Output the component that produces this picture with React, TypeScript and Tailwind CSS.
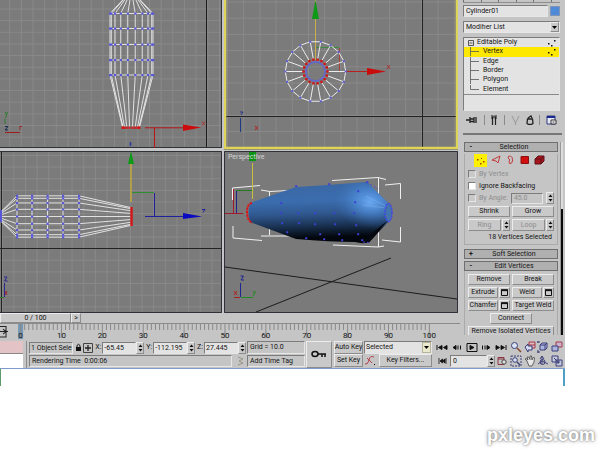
import type { ReactNode } from 'react';
import clsx from 'clsx';

const raised = 'border border-t-[#ececec] border-l-[#ececec] border-r-[#8c8c8c] border-b-[#8c8c8c] bg-[#c9c9c9]';
const sunken = 'border border-t-[#7c7c7c] border-l-[#7c7c7c] border-r-[#e6e6e6] border-b-[#e6e6e6]';

const range = (n: number) => Array.from({ length: n }, (_, i) => i);
const ringCos = [1, 0.94, 0.766, 0.5, 0.174, -0.174, -0.5, -0.766, -0.94, -1];
const ringSin = [0.985, 0.866, 0.643, 0.342, 0, -0.342, -0.643, -0.866, -0.985];

function Btn({ children, className, disabled, label }: { children?: ReactNode; className?: string; disabled?: boolean; label?: string }) {
  return (
    <button
      type="button"
      disabled={disabled}
      aria-label={label}
      className={clsx(raised, 'flex items-center justify-center whitespace-nowrap', disabled && 'text-[#8d8d8d]', className)}
    >
      {children}
    </button>
  );
}

function Spinner({ label }: { label: string }) {
  return (
    <button type="button" aria-label={label} className={clsx(raised, 'w-[8px] h-[12px] shrink-0 flex items-center justify-center')}>
      <svg width="5" height="8" viewBox="0 0 5 8"><path d="M0.500 3L2.500 0.500L4.500 3ZM0.500 5L2.500 7.500L4.500 5Z" fill="#111" /></svg>
    </button>
  );
}

function Gridlines({ x, y, step, w, h }: { x: number; y: number; step: number; w: number; h: number }) {
  return (
    <g stroke="#898989" strokeWidth="1">
      {range(Math.ceil((w - x) / step)).map((i) => (
        <line key={`v${i}`} x1={x + i * step} x2={x + i * step} y1="0" y2={h} />
      ))}
      {range(Math.ceil((h - y) / step)).map((i) => (
        <line key={`h${i}`} y1={y + i * step} y2={y + i * step} x1="0" x2={w} />
      ))}
    </g>
  );
}

function TopView() {
  const rings = [13.5, 28.5, 44.5, 60, 75];
  return (
    <svg viewBox="0 0 222 148" preserveAspectRatio="xMinYMin slice" className="block w-full h-[148px] bg-[#7b7b7b]" role="img" aria-label="Top viewport">
      <Gridlines x={9.7} y={9} step={11.65} w={222} h={148} />
      <path d="M206.500 0V148" stroke="#1c1c1c" />
      <path d="M0 147.500H221.500V0" stroke="#2e3138" fill="none" />
      <g stroke="#ececec" strokeWidth="0.9">
        {ringCos.map((c) => (
          <g key={c}>
            <line x1={131.5 + c * 6} y1="-3" x2={131.5 + c * 21.5} y2="13.5" />
            <line x1={131.5 + c * 21.5} y1="13.5" x2={131.5 + c * 21.5} y2="75" />
            <line x1={131.5 + c * 21.5} y1="75" x2={131 + c * 8.5} y2="127" />
          </g>
        ))}
        {rings.map((y) => <line key={y} x1="110" x2="153" y1={y} y2={y} />)}
      </g>
      {rings.map((y) => ringCos.map((c) => (
        <rect key={`${y}${c}`} x={130.5 + c * 21.5} y={y - 1} width="2.2" height="2.2" fill="#5757d8" />
      )))}
      {ringCos.map((c) => <rect key={c} x={130 + c * 8.5} y="126.5" width="2" height="2.4" fill="#d01818" />)}
      <path d="M145 127.800H184M154.500 128V148" stroke="#b81414" />
      <path d="M183 124.500L201 127.500L183 131Z" fill="#cc0c0c" />
      <path d="M202 121.500l3 4m0-4l-3 4" stroke="#b02424" strokeWidth="0.8" />
      <path d="M130.500 142v4" stroke="#2b3aa5" strokeWidth="1.500" />
      <path d="M5 132.500H20" stroke="#a01c1c" />
      <path d="M19.500 126.500h2.500M20 126v4" stroke="#a01c1c" strokeWidth="0.8" />
      <path d="M5 124V119M5 112l1.500 3l1-3M6.500 115l-1 3" stroke="#2f7a2f" fill="none" />
      <path d="M5 126.500h3l-3 3.500h3" stroke="#142d50" fill="none" />
    </svg>
  );
}

function FrontView() {
  const at = (deg: number, r: number) => [315.5 + r * Math.cos((deg * Math.PI) / 180), 71.5 + r * Math.sin((deg * Math.PI) / 180)];
  const outer = range(18).map((i) => at(i * 20, 30.2));
  const inner = range(18).map((i) => at(i * 20, 12));
  const core = range(18).map((i) => at(i * 20, 9.6));
  return (
    <svg viewBox="224 0 234 150" preserveAspectRatio="xMinYMin slice" className="block w-full h-[150px] bg-[#7b7b7b]" role="img" aria-label="Front viewport">
      <g transform="translate(224 0)"><Gridlines x={3.5} y={2} step={16.2} w={234} h={150} /></g>
      <path d="M422.500 0V150M224 116.500H458" stroke="#222" />
      <path d="M315.500 0V60" stroke="#c9b04c" />
      <path d="M312 19L315.500 0L319 19Z" fill="#0d9a16" />
      <path d="M316 47.500H339" stroke="#3f8a3f" />
      <path d="M339.500 48V71" stroke="#a84040" />
      <path d="M328 71.500H368" stroke="#b82020" />
      <path d="M367 68L386 71.500L367 75Z" fill="#c80c0c" />
      <path d="M387 65l3 4m0-4l-3 4" stroke="#b02424" strokeWidth="0.8" />
      <g stroke="#ececec" fill="none">
        <polygon points={outer.map((p) => p.join(',')).join(' ')} />
        {outer.map((p, i) => <line key={i} x1={p[0]} y1={p[1]} x2={inner[i][0]} y2={inner[i][1]} />)}
      </g>
      <polygon points={core.map((p) => p.join(',')).join(' ')} stroke="#6468c8" strokeWidth="1.800" fill="none" />
      {outer.map((p, i) => <rect key={i} x={p[0] - 1} y={p[1] - 1} width="2" height="2" fill="#5a5ad8" />)}
      {inner.map((p, i) => <rect key={i} x={p[0] - 1.2} y={p[1] - 1.2} width="2.4" height="2.4" fill="#cf1515" />)}
      <path d="M240.500 118V132" stroke="#1d3a82" />
      <path d="M240 112h3l-2 3" stroke="#27348c" fill="none" />
      <path d="M255 126l3 4m0-4l-3 4" stroke="#b02424" />
      <path d="M225 0V148H457V0" stroke="#ded558" strokeWidth="2.500" fill="none" />
    </svg>
  );
}

function LeftView() {
  const rings = [17, 32, 47.5, 63, 79];
  return (
    <svg viewBox="0 151 222 162" preserveAspectRatio="xMinYMin slice" className="block w-full h-[162px] bg-[#7b7b7b]" role="img" aria-label="Left viewport">
      <g transform="translate(0 151)"><Gridlines x={2.2} y={4.4} step={11.65} w={222} h={162} /></g>
      <path d="M0 248.500H222M1.500 151V313" stroke="#222" />
      <path d="M0 151.500H221.500V312.500H0" stroke="#2e3138" fill="none" />
      <g stroke="#ececec" strokeWidth="0.9">
        {ringSin.map((s) => (
          <g key={s}>
            <line x1="1" y1={216.5 + s * 5} x2="17" y2={216.5 + s * 21} />
            <line x1="17" y1={216.5 + s * 21} x2="79" y2={216.5 + s * 21} />
            <line x1="79" y1={216.5 + s * 21} x2="131" y2={216.5 + s * 9} />
          </g>
        ))}
        {rings.map((x) => <line key={x} y1="196" y2="237" x1={x} x2={x} />)}
      </g>
      {rings.map((x) => ringSin.map((s) => (
        <rect key={`${x}${s}`} x={x - 1} y={215.5 + s * 21} width="2.2" height="2.2" fill="#5757d8" />
      )))}
      <path d="M1 210V222" stroke="#5757d8" strokeWidth="2" />
      <path d="M131.500 207V226" stroke="#d01818" strokeWidth="2.500" />
      <path d="M131 163V202" stroke="#c0a83c" strokeWidth="1.500" />
      <path d="M128 164L131 151L134 164Z" fill="#0d9a16" />
      <path d="M132 192.500H154" stroke="#2f8f2f" />
      <path d="M154.500 193V216M145 216.500H184" stroke="#20209c" />
      <path d="M183 213L202 216.500L183 219Z" fill="#0a0ac0" />
      <path d="M202 209.500h3l-2 3" stroke="#20209c" fill="none" />
      <path d="M4.500 283V297M4 277h3l-2.500 4h3" stroke="#2a2a90" fill="none" />
      <path d="M0 297.500H4" stroke="#2f7a2f" />
      <path d="M5 291l2 4m0-4l-2 4" stroke="#9c2020" strokeWidth="0.8" />
    </svg>
  );
}

function PerspectiveView() {
  const hull = 'M250 203L296 187Q330 185 367 182L388 203V222L369 242.500Q362 244 355 242Q330 242 296 239L250 222Q247 213 250 203Z';
  const dots = [
    [281, 203], [281, 213], [287, 232], [298, 213], [299, 223], [306, 238], [315, 213], [315, 224], [320, 234],
    [324, 239], [334, 213], [335, 224], [339, 234], [342, 240], [355, 202], [354, 213], [356, 225], [358, 234],
    [358, 191], [296, 186], [329, 184], [367, 182], [362, 240], [282, 223],
  ];
  return (
    <svg viewBox="224 151 234 162" preserveAspectRatio="xMinYMin slice" className="block w-full h-[162px] bg-[#7a7a7a]" role="img" aria-label="Perspective viewport">
      <defs>
        <linearGradient id="body" gradientUnits="userSpaceOnUse" x1="310" y1="183" x2="312" y2="242">
          <stop offset="0" stopColor="#3a67a3" />
          <stop offset="0.3" stopColor="#3b6dae" />
          <stop offset="0.52" stopColor="#30588f" />
          <stop offset="0.72" stopColor="#1a3354" />
          <stop offset="0.93" stopColor="#03060c" />
        </linearGradient>
        <radialGradient id="shine" cx="0" cy="0" r="1" gradientUnits="userSpaceOnUse" gradientTransform="translate(370 202) rotate(12) scale(38 27)">
          <stop offset="0" stopColor="#6dadf6" stopOpacity="0.95" />
          <stop offset="0.45" stopColor="#4f8edc" stopOpacity="0.6" />
          <stop offset="1" stopColor="#3a6cae" stopOpacity="0" />
        </radialGradient>
      </defs>
      <path d="M225 267L457 299M256 312L391 258" stroke="#1c1c1c" />
      <g stroke="#f0f0f0" fill="none">
        <path d="M232.500 200V188L260 185.500M233 226V238L262 240.500M261 190L270 191.500L288 190.500M269.500 191V235M261 236H290" />
        <path d="M332 180.500L378 177.500L386 179.500M378.500 178V247M385 185L400.500 183.500V199M400.500 227V242L382 240M333 245L378 247L384 246" />
      </g>
      <path d="M252.500 163V199" stroke="#c9c040" />
      <path d="M249 152H256V161H249Z" fill="#0b9312" />
      <path d="M236 190.500H252" stroke="#237a23" />
      <path d="M225 213.500H243M233.500 189V213" stroke="#a31a2c" />
      <path d="M236.500 191V213" stroke="#22228a" />
      <path d={hull} fill="url(#body)" />
      <path d={hull} fill="url(#shine)" />
      <path d="M363 205L386 208M366 196L386 206" stroke="#8cc0f8" strokeOpacity="0.35" />
      <path d="M360 243L387 221L369 242.500Z" fill="#05080e" />
      <ellipse cx="388.500" cy="212.500" rx="3.500" ry="9" fill="#4274ae" stroke="#4646e0" strokeWidth="1.500" strokeDasharray="2 1" />
      <path d="M252 203Q247 204 247 212Q247 220 252 223" stroke="#e01414" strokeWidth="2" strokeDasharray="2.500 0.800" fill="none" />
      {dots.map(([x, y]) => <rect key={`${x}-${y}`} x={x - 0.8} y={y - 0.8} width="2" height="2" fill="#3d3fd6" />)}
      <path d="M367 182L378 189M363 242L371 243" stroke="#4646d8" strokeDasharray="2 2" />
      <path d="M240.500 283V297" stroke="#1c2690" />
      <path d="M234 297.500H240" stroke="#a82020" />
      <path d="M241 297.500H253" stroke="#218a21" />
      <path d="M240.500 276h3l-2.500 4h3" stroke="#1c2690" fill="none" />
      <path d="M234 291l3 4m0-4l-3 4" stroke="#b02020" />
      <path d="M253 291l1.500 2.500l1.500-2.500M254.500 293l-1 3" stroke="#218a21" fill="none" />
      <path d="M224.500 151.500H457.500V312.500H224.500Z" stroke="#2e3138" fill="none" />
      <text x="228" y="159" fontSize="7" fill="#d6d6d6">Perspective</text>
    </svg>
  );
}

function Timeline() {
  return (
    <div className="h-[17px] border-t border-[#8a8a8a] overflow-hidden">
      <svg viewBox="0 324 458 16" preserveAspectRatio="xMinYMin slice" className="block w-full h-[16px]" role="img" aria-label="Time ruler">
        <rect x="18" y="324" width="5" height="15" fill="#7397b4" />
        <path d="M0 326.500H6V337H0M0 331.500H8M3 329L6 331.500L3 334" stroke="#222" fill="none" />
        <g stroke="#8a8a8a">
          {range(101).map((i) => <line key={i} x1={20.5 + i * 4.07} x2={20.5 + i * 4.07} y1="324" y2={i % 10 ? 330 : 338} />)}
        </g>
        {range(11).map((i) => (
          <text key={i} x={20.5 + i * 40.7} y="338" fontSize="8" textAnchor="middle" fill="#111">{i * 10}</text>
        ))}
      </svg>
    </div>
  );
}

function ModifierStack() {
  return (
    <div className={clsx(sunken, 'mt-[4px] h-[74px] bg-[#e3e3e3]')}>
      <ul className="flex h-[57px] flex-col border-b border-[#8a8a8a]">
        {['Editable Poly', 'Vertex', 'Edge', 'Border', 'Polygon', 'Element'].map((name, i) => (
          <li key={name} className={clsx('flex min-h-0 flex-1', name === 'Vertex' && 'bg-[#ffe800]')}>
            <button type="button" className="flex flex-1 items-center gap-[2px] pl-[3px] pr-[2px] text-left">
              {i === 0 ? (
                <svg width="8" height="9" viewBox="0 0 8 9" fill="none" stroke="#333"><path d="M1.500 2.500h5v5h-5zM2.500 5h3" strokeWidth="0.8" /></svg>
              ) : (
                <svg width="14" height="9" viewBox="0 0 14 9" fill="none" stroke="#555"><path d={i === 5 ? 'M3.500 0V4.500H12' : 'M3.500 0V9M3.500 4.500H12'} strokeWidth="0.8" /></svg>
              )}
              <span className="flex-1">{name}</span>
              {i < 2 && <svg width="10" height="8" viewBox="0 0 10 8" fill="#111"><path d="M1 4h1.500v1.500H1zM4 6h1.500v1.500H4zM7 1h1.500v1.500H7z" /></svg>}
            </button>
          </li>
        ))}
      </ul>
    </div>
  );
}

function StackTools() {
  return (
    <div className="mt-[2px] flex h-[14px] items-center justify-between px-[3px] text-[#222]">
      <button type="button" aria-label="Pin stack">
        <svg width="12" height="10" viewBox="0 0 12 10"><path d="M0 5H4M4 2V8M4 4H8M4 6.500H8M8 2V8M10 2V8" stroke="currentColor" strokeWidth="1.300" fill="none" /></svg>
      </button>
      <span className="h-[10px] w-px bg-[#8a8a8a]" />
      <button type="button" aria-label="Show end result">
        <svg width="8" height="10" viewBox="0 0 8 10"><path d="M1 1h2v2h-2M2.500 2V10M7 1H5v2h2M5.500 2V10" stroke="currentColor" strokeWidth="1.200" fill="none" /></svg>
      </button>
      <span className="h-[10px] w-px bg-[#8a8a8a]" />
      <button type="button" aria-label="Make unique" disabled>
        <svg width="9" height="10" viewBox="0 0 9 10"><path d="M1 1L3 5L4.500 8L6 5L8 1M4.500 8v2" stroke="#999" fill="none" /></svg>
      </button>
      <button type="button" aria-label="Remove modifier">
        <svg width="8" height="10" viewBox="0 0 8 10"><path d="M1.500 4h5l.5 4.500l-1.500 1h-3L1 8.500ZM2 3L5 1L6 3" stroke="currentColor" strokeWidth="1.300" fill="none" /></svg>
      </button>
      <span className="h-[10px] w-px bg-[#8a8a8a]" />
      <button type="button" aria-label="Configure modifier sets">
        <svg width="11" height="10" viewBox="0 0 11 10"><path d="M1 1H9V9H1Z" fill="#e6e9f4" stroke="#2c3a80" /><path d="M1 2H9" stroke="#1c2a90" strokeWidth="2" /><path d="M5 5h5v4H5zM6.500 7h2" stroke="#333" fill="#fff" /></svg>
      </button>
    </div>
  );
}

function RolloutHeader({ sign, title }: { sign: string; title: string }) {
  return (
    <button type="button" className="flex h-[10px] w-full items-center border border-[#6f6f6f] bg-[#b0b0b0] px-[3px]">
      <span className="w-[6px] font-bold">{sign}</span>
      <span className="flex-1 text-center">{title}</span>
    </button>
  );
}

function Check({ label, disabled }: { label: string; disabled?: boolean }) {
  return (
    <label className={clsx('flex h-[12px] items-center gap-[3px] whitespace-nowrap', disabled && 'text-[#8d8d8d]')}>
      <input type="checkbox" disabled={disabled} className={clsx(sunken, 'size-[8px] appearance-none', disabled ? 'bg-[#c9c9c9]' : 'bg-white')} />
      {label}
    </label>
  );
}

function WindowGlyph() {
  return <svg width="7" height="7" viewBox="0 0 7 7"><path d="M.5 1H6.500V6.500H.5Z" fill="none" stroke="#111" /><path d="M0 1.200H7" stroke="#111" strokeWidth="1.800" /></svg>;
}

function SubObjectIcons() {
  return (
    <div className="mt-[2px] flex h-[12px] items-center gap-[3px] pl-[6px]">
      <button type="button" aria-label="Vertex" className="size-[13px] bg-[#fff000]">
        <svg viewBox="0 0 13 13"><path d="M3 5h1.500v1.500H3zM6 9h1.500v1.500H6zM9 7h1.500v1.500H9zM7 4h1v1h-1z" fill="#a04400" /></svg>
      </button>
      <button type="button" aria-label="Edge"><svg width="12" height="12" viewBox="0 0 12 12"><path d="M2 6L10 2L8 9L6 7Z" fill="none" stroke="#c23a3a" /></svg></button>
      <button type="button" aria-label="Border"><svg width="10" height="12" viewBox="0 0 10 12"><path d="M3 4Q3 1.500 5.500 2Q8 3 7.500 7Q7 10 4.500 9.500L4 7L5 6L3 4Z" fill="none" stroke="#c23a3a" /></svg></button>
      <button type="button" aria-label="Polygon" className="pl-[1px]"><svg width="12" height="12" viewBox="0 0 12 12"><path d="M2 2.500H9.500V9.500H2Z" fill="#d20f0f" stroke="#8a1212" /></svg></button>
      <button type="button" aria-label="Element"><svg width="11" height="12" viewBox="0 0 11 12"><path d="M1 5L4 2H10V7L7 10H1Z" fill="#a8141c" stroke="#5c1018" /><path d="M1.500 5H7V10M7 5L10 2" stroke="#5c1018" fill="none" /></svg></button>
    </div>
  );
}

function CommandPanel() {
  return (
    <aside className="w-[105px] shrink-0 pl-[3px]">
      <div className="pr-[5px]">
        <div className="flex h-[3px] justify-between border-b border-[#8e8e8e] pr-[8px]">
          {range(6).map((i) => <span key={i} className="w-px bg-[#6f6f6f]" />)}
        </div>
        <div className="mt-[2px] flex items-center gap-[2px]">
          <input aria-label="Object name" defaultValue="Cylinder01" className={clsx(sunken, 'h-[12px] min-w-0 flex-1 bg-[#e3e3e3] px-[2px]')} />
          <button type="button" aria-label="Object colour" className="size-[10px] border border-[#8095b5] bg-[#4f8ad8]" />
        </div>
        <div className="relative mt-[4px]">
          <select aria-label="Modifier list" className={clsx(sunken, 'block h-[12px] w-full appearance-none bg-[#e3e3e3] px-[2px]')}>
            <option>Modifier List</option>
          </select>
          <span className={clsx(raised, 'pointer-events-none absolute right-[1px] top-[1px] flex h-[10px] w-[9px] items-center justify-center')}>
            <svg width="5" height="3" viewBox="0 0 5 3"><path d="M0 0H5L2.500 3Z" /></svg>
          </span>
        </div>
        <ModifierStack />
        <StackTools />
      </div>
      <div className="mt-[6px] mr-[3px] h-[2px] bg-[#777]" />
      <div className="mt-[7px] mr-[2px] flex h-[193px] overflow-hidden pl-[1px]">
        <div className="min-w-0 flex-1">
          <RolloutHeader sign="-" title="Selection" />
          <div className="border border-t-0 border-[#aaa] px-[3px] pb-[2px]">
            <SubObjectIcons />
            <div className="mt-[2px]">
              <Check label="By Vertex" disabled />
              <Check label="Ignore Backfacing" />
              <div className="flex items-center gap-[3px]">
                <Check label="By Angle:" disabled />
                <input aria-label="Angle" disabled defaultValue="45.0" className={clsx(sunken, 'h-[11px] min-w-0 flex-1 px-[2px] text-[#8d8d8d]')} />
                <Spinner label="Step angle" />
              </div>
            </div>
            <div className="mt-[2px] grid grid-cols-2 gap-[2px]">
              <Btn className="h-[11px]">Shrink</Btn>
              <Btn className="h-[11px]">Grow</Btn>
              {['Ring', 'Loop'].map((name) => (
                <div key={name} className="flex gap-px">
                  <Btn disabled className="h-[12px] flex-1">{name}</Btn>
                  <Spinner label={`Step ${name}`} />
                </div>
              ))}
            </div>
            <p className="mt-px h-[10px] pr-[2px] text-right leading-[10px]">18 Vertices Selected</p>
          </div>
          <div className="mt-[4px]"><RolloutHeader sign="+" title="Soft Selection" /></div>
          <div className="mt-[2px]"><RolloutHeader sign="-" title="Edit Vertices" /></div>
          <div className="flex flex-col gap-[2px] border-x border-[#aaa] px-[3px] pt-[3px]">
            <div className="grid grid-cols-2 gap-[2px]">
              <Btn className="h-[11px]">Remove</Btn>
              <Btn className="h-[11px]">Break</Btn>
              {['Extrude', 'Weld', 'Chamfer'].map((name) => (
                <div key={name} className="flex gap-px">
                  <Btn className="h-[11px] flex-1">{name}</Btn>
                  <Btn label={`${name} settings`} className="size-[11px]"><WindowGlyph /></Btn>
                </div>
              ))}
              <Btn className="h-[11px]">Target Weld</Btn>
            </div>
            <Btn className="h-[11px] w-[42px] self-center">Connect</Btn>
            <Btn className="h-[11px]">Remove Isolated Vertices</Btn>
          </div>
        </div>
        <div className="ml-[2px] w-[3px] shrink-0 border-l border-[#999] bg-[#dcdcdc] pt-[67px]">
          <div className="h-full bg-[#0c0c0c]" />
        </div>
      </div>
    </aside>
  );
}

function Coord({ axis, value }: { axis: string; value: string }) {
  return (
    <div className="flex items-center">
      <label htmlFor={axis} className="w-[7px]">{axis}:</label>
      <input id={axis} defaultValue={value} className={clsx(sunken, 'h-[12px] w-[34px] bg-[#e3e3e3] px-px')} />
      <Spinner label={`Step ${axis}`} />
    </div>
  );
}

const playback = [
  { label: 'Go to start', w: 13, d: 'M1 2V7M2.500 4.500L6 2.500V6.500ZM7.500 4.500L11 2.500V6.500Z' },
  { label: 'Previous frame', w: 10, d: 'M1 4.500L4 2.500V6.500ZM6 2.500V6.500M8.500 2.500V6.500' },
  { label: 'Play', w: 12, d: 'M1 .5H11V8.500H1Z' },
  { label: 'Next frame', w: 10, d: 'M9 4.500L6 2.500V6.500ZM1.500 2.500V6.500M4 2.500V6.500' },
  { label: 'Go to end', w: 13, d: 'M12 2V7M10.500 4.500L7 2.500V6.500ZM5.500 4.500L2 2.500V6.500Z' },
];

function NavIcon({ label, children }: { label: string; children: ReactNode }) {
  return (
    <button type="button" aria-label={label} className="h-[12px] w-[13px]">
      <svg width="12" height="12" viewBox="0 0 12 12" fill="none" stroke="#3d3f78">{children}</svg>
    </button>
  );
}

function StatusBar() {
  return (
    <footer className="flex h-[29px] items-stretch border-b border-[#7d9ccb] pr-px pt-px">
      <div className="flex w-[23px] flex-col">
        <div className="h-[13px] border-b border-[#888] bg-[#e3c3c6]" />
        <div className="flex-1 bg-white" />
      </div>
      <div className="ml-[3px] flex flex-1 flex-col justify-between border-l border-[#8a8a8a] pb-px pl-[2px]">
        <div className="flex h-[13px] items-center justify-between">
          <span className={clsx(sunken, 'h-[12px] whitespace-nowrap pl-[1px] leading-[10px]')}>1 Object Sele</span>
          <button type="button" aria-label="Lock selection">
            <svg width="7" height="9" viewBox="0 0 7 9"><path d="M2 4V2.500Q3.500 0 5 2.500V4" stroke="#111" fill="none" /><rect x="1" y="4" width="5" height="4" fill="#111" /></svg>
          </button>
          <button type="button" aria-label="Absolute mode">
            <svg width="10" height="10" viewBox="0 0 10 10"><path d="M.5.5H9.500V9.500H.5Z" fill="none" stroke="#444" /><path d="M5 2V8M2 5H8" stroke="#222" strokeWidth="1.300" /></svg>
          </button>
          <Coord axis="X" value="-65.45" />
          <Coord axis="Y" value="-112.195" />
          <Coord axis="Z" value="27.445" />
        </div>
        <div className="flex h-[12px] items-center gap-[4px]">
          <span className={clsx(sunken, 'h-[12px] flex-1 pl-[2px] leading-[10px]')}>Rendering Time&nbsp; 0:00:06</span>
          <svg width="10" height="10" viewBox="0 0 10 10"><path d="M2 1L7 3L3 5L7 7L2 9" stroke="#9a9484" fill="none" /></svg>
        </div>
      </div>
      <div className="ml-[1px] flex w-[58px] flex-col justify-between pb-px">
        <span className={clsx(sunken, 'h-[13px] pl-[2px] leading-[11px]')}>Grid = 10.0</span>
        <button type="button" className={clsx(sunken, 'h-[12px] pl-[2px] text-left leading-[10px]')}>Add Time Tag</button>
      </div>
      <Btn label="Set keys" className="ml-px w-[26px]">
        <svg width="16" height="9" viewBox="0 0 16 9" fill="none" stroke="#111" strokeWidth="1.500"><ellipse cx="4" cy="4" rx="3" ry="2.500" /><path d="M7 4H15M11 4V7M14 4V7" /></svg>
      </Btn>
      <div className="ml-[2px] flex w-[29px] flex-col justify-between pb-px">
        <Btn className="h-[13px]">Auto Key</Btn>
        <Btn className="h-[13px]">Set Key</Btn>
      </div>
      <div className="ml-px flex w-[68px] flex-col justify-between pb-px">
        <div className="relative">
          <select aria-label="Key selection set" className={clsx(sunken, 'block h-[13px] w-full appearance-none bg-[#e3e3e3] px-[1px]')}>
            <option>Selected</option>
          </select>
          <span className="pointer-events-none absolute right-[1px] top-[1px] flex h-[11px] w-[9px] items-center justify-center border border-[#b6b49a] bg-[#e8e8cc]">
            <svg width="5" height="3" viewBox="0 0 5 3"><path d="M0 0H5L2.500 3Z" /></svg>
          </span>
        </div>
        <div className="flex gap-[3px]">
          <button type="button" aria-label="Default tangents">
            <svg width="12" height="11" viewBox="0 0 12 11"><path d="M1 9Q4 10 5 5T10 2M3 3L8 8" stroke="#b8404c" fill="none" /><path d="M10 9h1v1h-1z" /></svg>
          </button>
          <Btn className="h-[13px] flex-1">Key Filters...</Btn>
        </div>
      </div>
      <div className="ml-[4px] flex w-[71px] flex-col justify-between pb-px">
        <div className="flex h-[13px] items-center justify-between">
          {playback.map((p) => (
            <button key={p.label} type="button" aria-label={p.label}>
              <svg width={p.w} height="9" viewBox={`0 0 ${p.w} 9`} fill={p.label === 'Play' ? 'none' : '#111'} stroke="#111">
                <path d={p.d} />
                {p.label === 'Play' && <path d="M4 2.500L8 4.500L4 6.500Z" fill="#111" />}
              </svg>
            </button>
          ))}
        </div>
        <div className="flex h-[13px] items-center">
          <button type="button" aria-label="Key mode" className="w-[14px] pl-[2px]">
            <svg width="9" height="8" viewBox="0 0 9 8" stroke="#111"><path d="M1 1V7M8 1V7M2 4L4.500 2V6ZM4.500 4L7 2V6Z" fill="#111" strokeWidth="0.800" /></svg>
          </button>
          <input aria-label="Current frame" defaultValue="0" className={clsx(sunken, 'h-[12px] min-w-0 flex-1 bg-[#e3e3e3] px-[2px]')} />
          <Spinner label="Step frame" />
          <button type="button" aria-label="Time configuration" className="pl-[2px]">
            <svg width="10" height="10" viewBox="0 0 10 10" fill="none"><path d="M1 1.500H7V8.500H1ZM1 3H7" stroke="#8a3440" /><circle cx="7" cy="6" r="2.200" stroke="#444" fill="#ddd" /></svg>
          </button>
        </div>
      </div>
      <div className="ml-[3px] grid w-[54px] grid-cols-4 content-between pb-px">
        <NavIcon label="Zoom"><circle cx="4.500" cy="4.500" r="3" fill="#d8e4f4" /><path d="M7 7L11 11" stroke="#8a4a34" strokeWidth="1.600" /></NavIcon>
        <NavIcon label="Zoom all"><path d="M5 1H11V7H5Z" stroke="#a83848" fill="#dcb8c0" /><path d="M5 4H11" stroke="#a83848" /><path d="M1 6L4 3V5H8V9H4V11Z" fill="#d6dcf0" /></NavIcon>
        <NavIcon label="Zoom extents"><path d="M3 4H8V9H3ZM3 4L5 2H10V7L8 9M8 4L10 2" fill="#aab4dc" /><path d="M0 1H3M1 0V2M1 9V12M0 11H3" /></NavIcon>
        <NavIcon label="Zoom extents all"><path d="M5 1H11V6H5Z" stroke="#a83848" fill="#c8b4d0" /><path d="M1 5H7V10H1Z" fill="#aab4dc" /></NavIcon>
        <NavIcon label="Region zoom"><path d="M1 1H11V11H1Z" strokeDasharray="2 1" /><circle cx="5" cy="5" r="2.300" fill="#d8e4f4" /><path d="M7 7L10 10" strokeWidth="1.400" /></NavIcon>
        <NavIcon label="Pan"><path d="M3 6L1 4L2 3.500L4 5L3 2L4.500 2L6 4.500L6 1L7.500 1L8 5L9.500 2L10.500 3L10 7L8 11H5Z" stroke="#444" fill="#e8e8e8" strokeWidth="0.800" /></NavIcon>
        <NavIcon label="Arc rotate"><path d="M5 1V9M1 9L5 6L11 9M3 4L5 1L7 4" /><circle cx="5.500" cy="7" r="2.500" /></NavIcon>
        <NavIcon label="Maximize viewport"><path d="M1 1H7V7H1ZM5 5H11V11H5Z" fill="#c4c8dc" /><path d="M3 3L8 8M8 5.500V8H5.500" /></NavIcon>
      </div>
    </footer>
  );
}

export default function App() {
  return (
    <div className="min-h-screen bg-white font-[Roboto,'Liberation_Sans',sans-serif] text-[7px] leading-none text-[#141414]">
      <div className="mr-[35px] bg-[#c5c5c5]">
        <div className="flex">
          <main className="min-w-0 flex-1">
            <div className="grid grid-cols-[222fr_234fr] gap-x-[2px] pr-[2px]">
              <TopView />
              <FrontView />
            </div>
            <div className="mt-px grid grid-cols-[222fr_234fr] gap-x-[2px] pr-[2px]">
              <LeftView />
              <PerspectiveView />
            </div>
            <div className="flex h-[10px]">
              <Btn className="w-[71px]">0 / 100</Btn>
              <Btn className="w-[10px]" label="Next">&gt;</Btn>
            </div>
            <Timeline />
          </main>
          <CommandPanel />
        </div>
        <StatusBar />
      </div>
      <div className="mr-[35px] h-[17px] border-l border-r-2 border-l-[#5d9a6a] border-r-[#4f9fc4]" />
      <p className="mt-[39px] pr-[5px] text-right font-['Liberation_Sans',sans-serif] text-[18px] font-bold leading-[20px] text-white [text-shadow:0_0_2px_#777,0_0_4px_#999]">pxleyes.com</p>
    </div>
  );
}
